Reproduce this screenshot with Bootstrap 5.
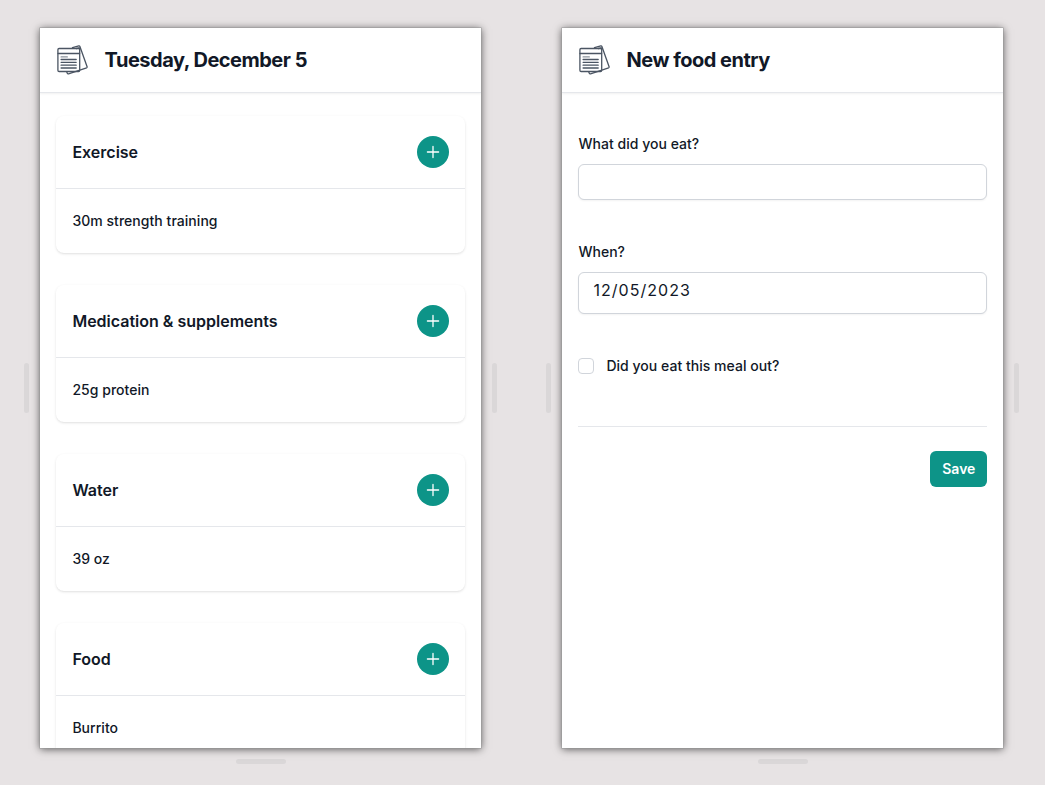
<!DOCTYPE html>
<html lang="en">
<head>
<meta charset="utf-8">
<meta name="viewport" content="width=device-width, initial-scale=1">
<title>Daily log</title>
<link href="https://cdn.jsdelivr.net/npm/bootstrap@5.3.0/dist/css/bootstrap.min.css" rel="stylesheet">
<style>
body{background:#e7e3e4;font-family:Inter,"Liberation Sans",sans-serif;color:#111827;font-size:14px;line-height:20px;height:785px;overflow:hidden;padding:28px 0 0 24.4px}
.stage{gap:49px}
.device{width:473px;gap:11px}
.screen{width:441px;height:720px;box-shadow:0 0 0 .5px #999,0 1px 8px 0 rgba(0,0,0,.65)}
.grip-v{width:5px;height:50px;border-radius:3px;background:#dad7d8}
.grip-h{width:50px;height:5px;border-radius:3px;background:#dad7d8;margin-top:11px}
.topbar{height:65px;padding:0 16px 0 17px;gap:16.2px;border-bottom:1px solid #e5e7eb;box-shadow:0 1px 2px rgba(0,0,0,.06)}
.topbar svg{width:31px;height:32px}
.topbar h1{font-size:20px;line-height:28px;letter-spacing:-.5px;font-weight:700}
.entries{padding:23px 16px 0;gap:32px}
.entry{height:137px;border-radius:8px;box-shadow:0 1px 3px rgba(0,0,0,.1),0 1px 2px -1px rgba(0,0,0,.1)}
.entry-head{height:73px;border-bottom:1px solid #e5e7eb;padding:0 16px}
.entry-head h2{font-size:16px;line-height:24px;font-weight:600}
.entry-text{height:64px;padding:0 16px;font-weight:500;letter-spacing:.04px}
.add{width:32px;height:32px;background:#0d9488;color:#fff}
.teal,.teal:hover{background:#0d9488;color:#fff}
.entry-form{padding:41px 16px 0;font-weight:500;letter-spacing:.03px}
.entry-form .form-control{border-color:#d1d5db;border-radius:6px;box-shadow:0 1px 2px rgba(0,0,0,.05);color:#111827;font-size:16px;line-height:24px;padding:5px 14px;height:36px;margin:10px 0 42px}
.entry-form .date-field{height:42px;letter-spacing:1.05px;padding:0 14px 6px}
.entry-form .form-check-input{width:16px;height:16px;border-color:#d1d5db;border-radius:4px}
.actions{border-top:1px solid #e5e7eb;padding-top:24px;margin-top:50px}
.save{height:36px;padding:0 12px;border:0;border-radius:6px;font-size:14px;font-weight:600;line-height:20px}
</style>
</head>
<body>
<svg width="0" height="0" class="position-absolute" aria-hidden="true">
  <symbol id="papers" viewBox="0 0 31 32">
    <g fill="none" stroke="#4b5563" stroke-width="1.3" stroke-linejoin="round" stroke-linecap="round">
      <path d="M15.5 3.700 21.800 1.900q.8-.2 1.100.6L30.100 22.700q.2.8-.5 1.100L11.500 29.800q-.9.2-1.200-.6l-.5-1.300M22.900 4.900 22 3.900l-2.500.6"/>
      <rect x=".9" y="4.500" width="21.800" height="23" rx="1.200"/>
      <path d="M1 9.500h21.600M4.100 15.500h15.100M4.100 18.300h15.100M4.100 21.200h15.100M4.100 24h15.100"/>
      <path d="M4.100 12.900h6.200" stroke="#8b929c"/>
    </g>
  </symbol>
  <symbol id="plus" viewBox="0 0 20 20"><path d="M10 4.400v11.200M4.400 10h11.200" fill="none" stroke="#fff" stroke-width="1.300" stroke-linecap="round"/></symbol>
</svg>
<main class="stage d-flex align-items-start">
  <section>
    <div class="device d-flex align-items-center">
      <div class="grip-v flex-shrink-0"></div>
      <div class="screen bg-white overflow-hidden flex-shrink-0">
        <header class="topbar d-flex align-items-center"><svg><use href="#papers"/></svg><h1 class="m-0">Tuesday, December 5</h1></header>
        <div class="entries d-flex flex-column">
          <article class="entry flex-shrink-0">
            <div class="entry-head d-flex align-items-center justify-content-between"><h2 class="m-0">Exercise</h2><button class="add btn rounded-circle border-0 p-0 d-flex align-items-center justify-content-center teal" aria-label="Add"><svg width="20" height="20"><use href="#plus"/></svg></button></div>
            <div class="entry-text d-flex align-items-center">30m strength training</div>
          </article>
          <article class="entry flex-shrink-0">
            <div class="entry-head d-flex align-items-center justify-content-between"><h2 class="m-0">Medication &amp; supplements</h2><button class="add btn rounded-circle border-0 p-0 d-flex align-items-center justify-content-center teal" aria-label="Add"><svg width="20" height="20"><use href="#plus"/></svg></button></div>
            <div class="entry-text d-flex align-items-center">25g protein</div>
          </article>
          <article class="entry flex-shrink-0">
            <div class="entry-head d-flex align-items-center justify-content-between"><h2 class="m-0">Water</h2><button class="add btn rounded-circle border-0 p-0 d-flex align-items-center justify-content-center teal" aria-label="Add"><svg width="20" height="20"><use href="#plus"/></svg></button></div>
            <div class="entry-text d-flex align-items-center">39 oz</div>
          </article>
          <article class="entry flex-shrink-0">
            <div class="entry-head d-flex align-items-center justify-content-between"><h2 class="m-0">Food</h2><button class="add btn rounded-circle border-0 p-0 d-flex align-items-center justify-content-center teal" aria-label="Add"><svg width="20" height="20"><use href="#plus"/></svg></button></div>
            <div class="entry-text d-flex align-items-center">Burrito</div>
          </article>
        </div>
      </div>
      <div class="grip-v flex-shrink-0"></div>
    </div>
    <div class="grip-h mx-auto"></div>
  </section>
  <section>
    <div class="device d-flex align-items-center">
      <div class="grip-v flex-shrink-0"></div>
      <div class="screen bg-white overflow-hidden flex-shrink-0">
        <header class="topbar d-flex align-items-center"><svg><use href="#papers"/></svg><h1 class="m-0">New food entry</h1></header>
        <form class="entry-form">
          <label class="d-block" for="food">What did you eat?</label>
          <input class="form-control" id="food" type="text">
          <label class="d-block" for="day">When?</label>
          <input class="form-control date-field" id="day" type="text" value="12/05/2023">
          <div class="d-flex align-items-center"><input class="form-check-input m-0" id="out" type="checkbox"><label class="ms-2 ps-1" for="out">Did you eat this meal out?</label></div>
          <div class="actions d-flex justify-content-end"><button type="button" class="save btn teal">Save</button></div>
        </form>
      </div>
      <div class="grip-v flex-shrink-0"></div>
    </div>
    <div class="grip-h mx-auto"></div>
  </section>
</main>
<script src="https://cdn.jsdelivr.net/npm/bootstrap@5.3.0/dist/js/bootstrap.bundle.min.js"></script>
</body>
</html>
